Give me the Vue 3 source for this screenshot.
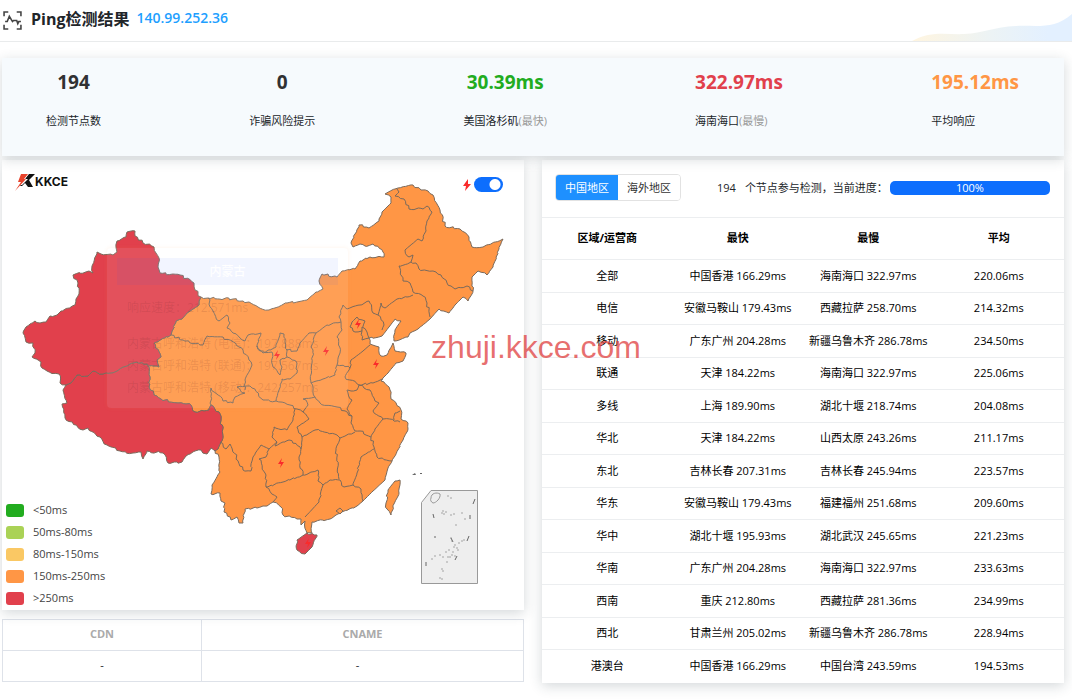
<script setup>
import { ref } from 'vue'

const lightning = ref(true)
const region = ref('cn')

const stats = [
  { value: '194', label: '检测节点数', tone: 'dark' },
  { value: '0', label: '诈骗风险提示', tone: 'dark' },
  { value: '30.39ms', label: '美国洛杉矶', note: '(最快)', tone: 'green' },
  { value: '322.97ms', label: '海南海口', note: '(最慢)', tone: 'red', left: true },
  { value: '195.12ms', label: '平均响应', tone: 'orange', left: true },
]

const legend = [
  { text: '<50ms', tone: 'l1' },
  { text: '50ms-80ms', tone: 'l2' },
  { text: '80ms-150ms', tone: 'l3' },
  { text: '150ms-250ms', tone: 'l4' },
  { text: '>250ms', tone: 'l5' },
]

const rows = [
  ['全部', '中国香港 166.29ms', '海南海口 322.97ms', '220.06ms'],
  ['电信', '安徽马鞍山 179.43ms', '西藏拉萨 258.70ms', '214.32ms'],
  ['移动', '广东广州 204.28ms', '新疆乌鲁木齐 286.78ms', '234.50ms'],
  ['联通', '天津 184.22ms', '海南海口 322.97ms', '225.06ms'],
  ['多线', '上海 189.90ms', '湖北十堰 218.74ms', '204.08ms'],
  ['华北', '天津 184.22ms', '山西太原 243.26ms', '211.17ms'],
  ['东北', '吉林长春 207.31ms', '吉林长春 245.94ms', '223.57ms'],
  ['华东', '安徽马鞍山 179.43ms', '福建福州 251.68ms', '209.60ms'],
  ['华中', '湖北十堰 195.93ms', '湖北武汉 245.65ms', '221.23ms'],
  ['华南', '广东广州 204.28ms', '海南海口 322.97ms', '233.63ms'],
  ['西南', '重庆 212.80ms', '西藏拉萨 281.36ms', '234.99ms'],
  ['西北', '甘肃兰州 205.02ms', '新疆乌鲁木齐 286.78ms', '228.94ms'],
  ['港澳台', '中国香港 166.29ms', '中国台湾 243.59ms', '194.53ms'],
]

const tip = [
  ['内蒙古呼和浩特 (电信)：', '197.888ms'],
  ['内蒙古呼和浩特 (联通)：', '197.567ms'],
  ['内蒙古呼和浩特 (移动)：', '242.257ms'],
]

// Splits each segment and nudges the new points, so borders look surveyed.
// The nudge depends on the position only: shared borders stay identical.
function rough(text, closed) {
  const pts = text.trim().split(/\s+/).map((p) => p.split(',').map(Number))
  const out = []
  const n = closed ? pts.length : pts.length - 1
  for (let i = 0; i < n; i++) {
    const a = pts[i]
    const b = pts[(i + 1) % pts.length]
    out.push(a)
    const len = Math.hypot(b[0] - a[0], b[1] - a[1])
    const parts = Math.floor(len / 2.5)
    for (let k = 1; k < parts; k++) {
      const x = a[0] + ((b[0] - a[0]) * k) / parts
      const y = a[1] + ((b[1] - a[1]) * k) / parts
      const h = Math.abs(Math.sin(x * 12.9898 + y * 78.233) * 4375.85)
      const s = (h - Math.floor(h) - 0.5) * 2.2
      out.push([x + s, y - s])
    }
  }
  if (!closed) out.push(pts[pts.length - 1])
  return 'M' + out.map((p) => p[0].toFixed(1) + ' ' + p[1].toFixed(1)).join('L') + (closed ? 'Z' : '')
}

const xinjiang = rough('127,232 135,231 135,236 143,243 154,247 159,258 158,267 160,273 180,275 194,283 195,290 201,297 199,301 199,305 193,309 187,313 182,319 176,321 172,331 171,335 154,343 161,357 157,360 159,367 148,366 147,364 133,363 123,367 117,371 103,374 93,371 88,376 77,375 71,383 66,385 60,383 59,374 47,371 42,368 41,362 32,357 35,353 33,343 26,342 23,333 26,327 35,321 40,323 46,322 50,316 57,315 61,311 75,305 76,299 79,294 78,283 73,275 89,271 93,273 92,266 97,252 101,254 113,255 117,252 117,241 126,237', true)
const tibet = rough('66,385 63,390 67,403 62,404 65,418 83,430 88,428 100,437 107,445 120,451 133,453 141,452 143,459 147,451 163,453 168,463 182,462 186,456 195,451 201,450 207,454 211,448 215,451 218,449 223,437 221,420 219,412 211,405 209,410 204,411 195,412 191,405 178,403 161,399 154,395 149,387 150,377 148,366 147,364 133,363 123,367 117,371 103,374 93,371 88,376 77,375 71,383', true)
const mainland = rough('201,297 208,298 233,299 243,301 258,307 269,310 287,303 307,300 316,292 323,289 319,281 322,274 337,277 342,271 355,269 360,261 370,257 384,257 383,252 373,244 365,246 360,244 353,247 351,243 359,225 369,228 379,221 382,212 391,203 391,197 385,194 395,189 413,185 421,190 428,191 433,195 440,210 445,226 460,229 469,237 472,247 483,247 503,239 499,249 493,267 487,275 478,271 472,277 473,291 468,301 463,297 455,305 449,313 439,309 430,319 418,329 410,333 408,337 394,341 395,330 401,321 395,319 389,327 382,336 369,338 370,344 379,347 381,356 387,355 393,343 395,351 406,353 403,361 396,363 388,373 383,378 381,381 390,390 391,399 401,410 401,419 408,423 408,429 403,440 392,461 388,468 385,480 373,491 363,501 357,506 340,513 330,519 312,522 312,533 307,533 305,521 301,525 301,519 297,519 283,515 281,507 273,502 267,506 257,508 245,509 243,523 239,523 237,517 231,520 224,512 225,503 221,501 220,493 211,494 212,485 220,472 219,457 215,450 218,449 223,437 221,420 219,412 211,405 209,410 204,411 195,412 191,405 178,403 161,399 154,395 149,387 150,377 148,366 159,367 157,360 161,357 154,343 171,335 172,331 176,321 182,319 187,313 193,309 199,305 199,301', true)
const hainan = rough('297,540 307,533 317,535 312,547 305,554 297,550', true)
const taiwan = rough('386,503 388,490 395,481 400,480 399,493 393,507 391,515 387,509', true)

const borders = [
  '397,189 399,192 395,196 404,199 409,209 423,209 427,206 432,212 427,221 426,231 422,241 418,239 405,250 409,257 413,255 411,262',
  '411,262 416,263 419,269 433,271 441,275 447,283 455,289 467,286 473,291',
  '411,262 399,266 403,281 410,283 413,292',
  '413,292 423,296 427,303 430,317',
  '413,295 397,299 385,308 381,303 378,315 384,325 382,330',
  '378,315 373,313 369,301 360,305 347,309 343,305 339,317 341,322',
  '341,322 342,330 337,337 340,353 337,365',
  '341,322 327,325 316,333 311,347 313,350 312,363 311,383',
  '311,383 323,379 335,375 337,365 350,368 345,377 359,385',
  '316,333 309,333 300,343 297,351 287,350 285,342 284,334 280,333 276,347 263,353 257,346',
  '257,346 260,351 272,352 273,367 280,375 282,367 280,360 287,357 287,349',
  '287,357 297,363 297,373 290,379 282,379 279,390 276,401 290,405 297,409 303,412 308,405 303,399 315,397',
  '311,383 315,397 320,403 337,407 352,416 351,423 355,431',
  '352,416 347,409 352,400 347,390 357,390 359,385',
  '350,368 351,360 363,351 370,345',
  '359,385 373,383 383,379',
  '359,385 370,390 375,401 379,403 373,411 383,419 400,422',
  '394,420 395,413 400,411',
  '383,419 375,429 371,437 374,447 377,457 392,461',
  '355,431 360,431 371,437',
  '374,449 361,457 357,473 353,485 361,489 363,501',
  '353,485 344,487 340,480 330,480 323,485 318,481 318,470 303,475',
  '302,437 315,430 337,435 340,438 355,432',
  '340,438 336,450 339,479',
  '303,475 299,457 301,449 302,437 297,427 309,419 303,412',
  '295,409 293,420 287,430 274,427 272,437 277,442 275,446 289,440 301,449',
  '220,442 226,449 230,444 243,470 251,471 253,457 261,445 269,449 266,457 259,459 265,473 266,487',
  '277,442 269,449',
  '266,487 283,482 303,475',
  '266,487 277,497 273,502',
  '323,485 319,502 305,517',
  '171,335 183,340 203,345 207,336 223,337 239,347 243,350 252,365 245,380 245,390',
  '211,405 211,388 223,401 233,403 235,397 245,393 237,387 246,386 252,388 263,400 276,401',
  '208,298 213,311 219,321 227,315 230,323 227,328 233,333 245,341 248,335 261,333 257,347',
].map((b) => rough(b, false))
const cities = [
  '350,327 352,322 357,317 365,321 362,331 353,331',
  '362,327 367,332 369,338 362,340 362,331',
  '336,511 340,508 343,511 340,514',
].map((b) => rough(b, true))

const bolts = [
  [358, 324],
  [277, 355],
  [326, 351],
  [376, 364],
  [281, 463],
  [308, 543],
]
const reefs = [
  [448, 496], [451, 498], [443, 511], [444, 514], [446, 512], [442, 513], [451, 515], [454, 514], [462, 513], [465, 519],
  [456, 525], [451, 538], [452, 541], [455, 545], [459, 543], [462, 541], [457, 548], [454, 547], [449, 550], [446, 552],
  [440, 555], [435, 556], [432, 559], [443, 557], [450, 557], [452, 555], [455, 556], [458, 550], [447, 562], [442, 569],
  [443, 571], [440, 578], [442, 579], [464, 540], [453, 552], [448, 557],
]
</script>

<template>
  <div class="page">
    <header class="top">
      <svg class="scan" viewBox="0 0 18 18" aria-hidden="true">
        <path d="M1 5V1H5M13 1H17V5M17 13V17H13M5 17H1V13" />
        <path d="M2 10H4L6 5L9 10L10 9H13L14 12L15 10H17" />
      </svg>
      <h1>Ping检测结果</h1>
      <a href="#ip" class="ip">140.99.252.36</a>
      <svg class="wave" viewBox="0 0 160 27" aria-hidden="true">
        <defs>
          <linearGradient id="waveFill" x1="0" x2="1" y1="0" y2="0">
            <stop offset="0" stop-color="#fff5e0" />
            <stop offset="0.5" stop-color="#ecf3f5" />
            <stop offset="0.85" stop-color="#e3f0ff" />
          </linearGradient>
        </defs>
        <path fill="url(#waveFill)" d="M0 27C20 16 36 21 52 20C72 19 82 13 104 12C125 11 142 16 160 0V27Z" />
      </svg>
    </header>

    <main>
      <section class="stats card">
        <div v-for="s in stats" :key="s.label" class="stat" :class="{ left: s.left }">
          <strong :class="s.tone">{{ s.value }}</strong>
          <span>{{ s.label }}<em v-if="s.note">{{ s.note }}</em></span>
        </div>
      </section>

      <div class="columns">
        <div class="side">
          <section class="map card">
            <svg class="china" viewBox="2 160 522 450" role="img" aria-label="中国地区">
              <g class="land">
                <path class="warm" :d="mainland" />
                <path class="warm" :d="taiwan" />
                <path class="hot" :d="tibet" />
                <path class="hot" :d="xinjiang" />
                <path class="hot" :d="hainan" />
                <path v-for="b in borders" :key="b" fill="none" :d="b" />
                <path v-for="c in cities" :key="c" class="warm" :d="c" />
              </g>
              <path
                v-for="b in bolts"
                :key="b.join()"
                class="bolt"
                d="M1 -5L-3 1H0L-1 5L3 -1H0Z"
                :transform="`translate(${b[0]} ${b[1]})`"
              />
              <path fill="#666" d="M412 475L415 473L416 475ZM420 473H422V474H420Z" />
              <path class="inset" d="M421.500 502.500L431 490.500H477.500V583.500H421.500Z" />
              <path class="islet" d="M431 498C431 493 437 492 440 494C441 498 436 503 433 503C431 502 430 500 431 498Z" />
              <path class="dash" d="M475 499L473 504M470 515V519M433 514L434 518M469 536L467 541M435 536V538M457 556L455 560M426 562V566M451 538L453 542" />
              <circle v-for="r in reefs" :key="r.join()" :cx="r[0]" :cy="r[1]" r="0.7" fill="#888" />
            </svg>

            <div class="brand">
              <svg viewBox="0 0 20 17" aria-hidden="true">
                <path fill="#111" d="M13 0H20L14 6L18 13H13L10 9L7 12H5L10 5Z" />
                <path fill="#fff" d="M12 0H14L10 5H13L7 11H5Z" />
                <path fill="#e8432c" d="M6 0H13L9 5H11L0 17L6 8H3Z" />
              </svg>
              <b>KKCE</b>
            </div>

            <label class="toggle">
              <svg viewBox="0 0 8 12" aria-label="闪电"><path d="M5 0L0 7H3L2 12L8 5H5Z" /></svg>
              <input v-model="lightning" type="checkbox" role="switch" aria-label="闪电" />
            </label>

            <div class="tooltip">
              <h2>内蒙古</h2>
              <p class="lead">响应速度：212.571ms</p>
              <p v-for="t in tip" :key="t[0]"><span>{{ t[0] }}</span><span>{{ t[1] }}</span></p>
            </div>

            <ul class="legend">
              <li v-for="l in legend" :key="l.text"><i :class="l.tone"></i>{{ l.text }}</li>
            </ul>
          </section>

          <table class="dns">
            <thead>
              <tr><th>CDN</th><th>CNAME</th></tr>
            </thead>
            <tbody>
              <tr><td>-</td><td>-</td></tr>
            </tbody>
          </table>
        </div>

        <section class="results card">
          <div class="bar">
            <div class="tabs">
              <button type="button" :class="{ on: region === 'cn' }" @click="region = 'cn'">中国地区</button>
              <button type="button" :class="{ on: region === 'sea' }" @click="region = 'sea'">海外地区</button>
            </div>
            <span class="count">194</span>
            <span>个节点参与检测，当前进度：</span>
            <div class="progress" role="progressbar" aria-label="当前进度" aria-valuenow="100"><span>100%</span></div>
          </div>
          <table class="grid">
            <thead>
              <tr><th>区域/运营商</th><th>最快</th><th>最慢</th><th>平均</th></tr>
            </thead>
            <tbody>
              <tr v-for="r in rows" :key="r[0]"><td v-for="(c, i) in r" :key="i">{{ c }}</td></tr>
            </tbody>
          </table>
        </section>
      </div>
    </main>
    <div class="mark">zhuji.kkce.com</div>
  </div>
</template>

<style>
body {
  background: #fff;
}
</style>

<style scoped>
.page {
  position: relative;
  min-height: 100vh;
  overflow: hidden;
  box-sizing: border-box;
  font: 11px/16px "Open Sans", "Noto Sans", "Noto Sans CJK SC", sans-serif;
  color: #212529;
}
.page * {
  box-sizing: border-box;
}
.top {
  position: relative;
  display: flex;
  align-items: center;
  height: 42px;
  padding: 0 3px 4px;
  border-bottom: 1px solid #e9ebec;
}
.scan {
  width: 19px;
  height: 19px;
  margin-top: 4px;
  fill: none;
  stroke: #444;
  stroke-width: 1.5;
}
h1 {
  margin: 0 7px 0 9px;
  font-size: 16px;
  line-height: 24px;
  font-weight: 700;
}
.ip {
  font-size: 14px;
  line-height: 20px;
  font-weight: 600;
  color: #1e9fff;
  text-decoration: none;
  margin-bottom: 2px;
}
.wave {
  position: absolute;
  right: 0;
  bottom: 0;
  width: 160px;
  height: 27px;
}
main {
  padding: 16px 8px 16px 2px;
}
.card {
  background: #fff;
  box-shadow: 0 3px 12px rgba(40, 60, 70, 0.2);
}
.stats {
  position: relative;
  z-index: 1;
  display: flex;
  justify-content: space-between;
  height: 98px;
  padding: 11px 45px 0 44px;
  background: #f6fafd;
}
.stat {
  display: flex;
  flex-direction: column;
  align-items: center;
  gap: 18px;
}
.stat.left {
  align-items: flex-start;
}
.stat strong {
  font-size: 19px;
  line-height: 26px;
}
.stat span {
  line-height: 16px;
}
.stat em {
  font-style: normal;
  color: #999;
}
.dark { color: #303133; }
.green { color: #22ac1f; }
.red { color: #e1404c; }
.orange { color: #ff9645; }
.columns {
  display: grid;
  grid-template-columns: 1fr 1fr;
  gap: 18px;
  align-items: start;
  margin-top: 4px;
}
.map {
  position: relative;
}
.china {
  display: block;
  width: 100%;
}
.land path {
  stroke: #7a6a5c;
  stroke-width: 1;
  stroke-linejoin: round;
}
.warm { fill: #ff9645; }
.hot { fill: #e1404c; }
.bolt { fill: #fa2b2b; }
.inset {
  fill: #eee;
  stroke: #999;
}
.islet {
  fill: none;
  stroke: #999;
}
.dash {
  fill: none;
  stroke: #666;
}
.brand {
  position: absolute;
  left: 13px;
  top: 14px;
  display: flex;
  align-items: flex-start;
  color: #111;
}
.brand svg {
  width: 20px;
  height: 17px;
}
.brand b {
  font: 700 12px/16px Inter, sans-serif;
}
.toggle {
  position: absolute;
  right: 21px;
  top: 17px;
  display: flex;
  align-items: center;
  gap: 3px;
}
.toggle svg {
  width: 8px;
  height: 12px;
  fill: #fa2b2b;
}
.toggle input {
  appearance: none;
  width: 29px;
  height: 15px;
  margin: 0;
  border-radius: 8px;
  background: radial-gradient(circle at 7px 50%, #fff 5px, transparent 6px) #adb5bd;
}
.toggle input:checked {
  background: radial-gradient(circle at 21px 50%, #fff 5px, transparent 6px) #0d6efd;
}
.tooltip {
  position: absolute;
  left: 105px;
  top: 88px;
  width: 241px;
  height: 160px;
  padding: 10px;
  border-radius: 4px;
  background: rgba(255, 255, 255, 0.09);
  box-shadow: 0 0 4px rgba(255, 150, 69, 0.12);
  font-size: 12px;
  color: rgba(90, 30, 30, 0.13);
}
.tooltip h2 {
  margin: 0 0 12px;
  background: rgba(30, 90, 255, 0.06);
  color: #fff;
  font-size: 12px;
  font-weight: 500;
  line-height: 27px;
  text-align: center;
}
.tooltip p {
  display: flex;
  margin: 0 0 0 10px;
  line-height: 22px;
}
.tooltip .lead {
  margin-bottom: 14px;
}
.legend {
  position: absolute;
  left: 4px;
  bottom: 5px;
  display: flex;
  flex-direction: column;
  gap: 8px;
  margin: 0;
  padding: 0;
  list-style: none;
  color: #444;
}
.legend li {
  display: flex;
  align-items: center;
  gap: 9px;
  line-height: 14px;
}
.legend i {
  width: 18px;
  height: 13px;
  border-radius: 3px;
}
.l1 { background: #22ac1f; }
.l2 { background: #aad256; }
.l3 { background: #fac864; }
.l4 { background: #ff9645; }
.l5 { background: #e1404c; }
table {
  width: 100%;
  table-layout: fixed;
  border-collapse: collapse;
}
th,
td {
  padding: 0;
  text-align: center;
}
.dns {
  margin-top: 9px;
  color: #212529;
}
.dns th,
.dns td {
  height: 31px;
  padding-bottom: 2px;
  border: 1px solid #dee2e9;
}
.dns th {
  color: #aaa;
}
.dns th:first-child {
  width: 199px;
}
.dns td:last-child {
  padding-right: 10px;
}
.bar {
  display: flex;
  align-items: center;
  height: 57px;
  padding: 0 14px 2px 13px;
  white-space: nowrap;
}
.tabs {
  display: flex;
  border: 1px solid #e2e2e2;
  border-radius: 4px;
  overflow: hidden;
}
.tabs button {
  width: 62px;
  height: 25px;
  padding: 0;
  border: 0;
  background: #fff;
  color: #333;
  font: inherit;
}
.tabs .on {
  background: #1e90ff;
  color: #fff;
}
.count {
  margin: 0 9px 0 36px;
}
.progress {
  flex: 1;
  height: 14px;
  margin-left: 2px;
  border-radius: 5px;
  background: #0d6efd;
  color: #fff;
  line-height: 14px;
  text-align: center;
}
.grid {
  color: #000;
}
.grid th,
.grid td {
  height: 33px;
  padding-bottom: 1px;
  border-top: 1px solid #eceef0;
  white-space: nowrap;
}
.grid tr:nth-child(even) td {
  height: 32px;
}
.grid thead th {
  height: 42px;
}
.mark {
  position: absolute;
  left: 0;
  right: 0;
  top: 329px;
  z-index: 2;
  color: rgba(222, 56, 56, 0.72);
  font: 32px/36px "Liberation Sans", Arial, sans-serif;
  text-align: center;
  pointer-events: none;
}
</style>
